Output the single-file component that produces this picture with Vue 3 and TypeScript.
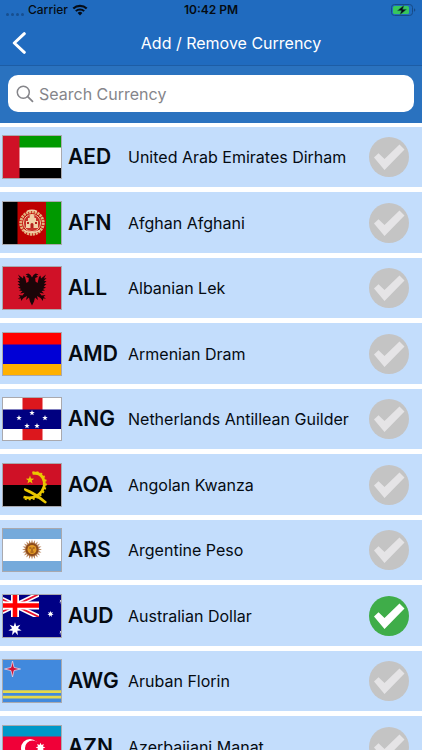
<script setup lang="ts">
import { ref } from 'vue'

interface Currency {
  code: string
  name: string
  selected: boolean
}

const query = ref('')

const currencies = ref<Currency[]>([
  { code: 'AED', name: 'United Arab Emirates Dirham', selected: false },
  { code: 'AFN', name: 'Afghan Afghani', selected: false },
  { code: 'ALL', name: 'Albanian Lek', selected: false },
  { code: 'AMD', name: 'Armenian Dram', selected: false },
  { code: 'ANG', name: 'Netherlands Antillean Guilder', selected: false },
  { code: 'AOA', name: 'Angolan Kwanza', selected: false },
  { code: 'ARS', name: 'Argentine Peso', selected: false },
  { code: 'AUD', name: 'Australian Dollar', selected: true },
  { code: 'AWG', name: 'Aruban Florin', selected: false },
  { code: 'AZN', name: 'Azerbaijani Manat', selected: false },
])

function matches(c: Currency): boolean {
  const q = query.value.trim().toLowerCase()
  return !q || c.code.toLowerCase().includes(q) || c.name.toLowerCase().includes(q)
}

// Points of a regular star, tip up.
function star(cx: number, cy: number, outer: number, inner: number, tips: number): string {
  const pts: string[] = []
  for (let i = 0; i < tips * 2; i++) {
    const r = i % 2 === 0 ? outer : inner
    const a = (Math.PI * i) / tips - Math.PI / 2
    pts.push(`${(cx + r * Math.cos(a)).toFixed(2)},${(cy + r * Math.sin(a)).toFixed(2)}`)
  }
  return pts.join(' ')
}

const antillesStars: [number, number][] = [[30, 16], [17, 21], [43, 21], [25, 29], [35, 29]]
</script>

<template>
  <div class="screen">
    <header class="top">
      <div class="status">
        <div class="carrier">
          <span class="dots"><i v-for="n in 4" :key="n"></i></span>
          <span>Carrier</span>
          <svg class="wifi" viewBox="0 0 16 12" aria-hidden="true">
            <path d="M1.3 4.5a9.6 9.6 0 0 1 13.4 0" fill="none" stroke="#050d18" stroke-width="2.2" />
            <path d="M3.8 7.1a6 6 0 0 1 8.4 0" fill="none" stroke="#050d18" stroke-width="2" />
            <path d="M8 11.4 5.6 9a3.4 3.4 0 0 1 4.8 0z" fill="#050d18" />
          </svg>
        </div>
        <time>10:42 PM</time>
        <svg class="battery" viewBox="0 0 25 12" aria-hidden="true">
          <rect x="0.5" y="0.5" width="21" height="11" rx="3" fill="none" stroke="#174a86" />
          <rect x="2" y="2" width="16" height="8" rx="1.5" fill="#37c75c" />
          <path d="M23 4.2v3.6c1.8-.6 1.8-3 0-3.6z" fill="#174a86" />
          <path d="M13.2.9 6.3 6.7h4L8.8 11.1l6.9-5.8h-4z" fill="#050d18" stroke="#2f8f64" stroke-width=".5" />
        </svg>
      </div>
      <nav class="nav">
        <button class="back" type="button" aria-label="Back">
          <svg viewBox="0 0 14 22" aria-hidden="true">
            <path d="M12.3 1.7 2.3 11l10 9.300" fill="none" stroke="#fff" stroke-width="3" stroke-linecap="round" stroke-linejoin="round" />
          </svg>
        </button>
        <h1>Add / Remove Currency</h1>
      </nav>
    </header>

    <div class="search">
      <label class="field">
        <svg viewBox="0 0 18 18" aria-hidden="true">
          <circle cx="7.3" cy="7.3" r="6" fill="none" stroke="#85858a" stroke-width="1.5" />
          <path d="m11.7 11.7 4.8 4.6" stroke="#85858a" stroke-width="1.8" stroke-linecap="round" />
        </svg>
        <input v-model="query" type="text" placeholder="Search Currency" aria-label="Search Currency" />
      </label>
    </div>

    <ul class="list">
      <li v-for="c in currencies.filter(matches)" :key="c.code">
        <label class="row">
          <svg class="flag" viewBox="0 0 60 44" aria-hidden="true">
            <g v-if="c.code === 'AED'">
              <rect width="60" height="44" fill="#fff" />
              <rect width="60" height="12.5" fill="#009a00" />
              <rect y="33" width="60" height="11" fill="#000" />
              <rect width="17.5" height="44" fill="#cf1126" />
            </g>
            <g v-else-if="c.code === 'AFN'">
              <rect width="60" height="44" fill="#be0000" />
              <rect width="15.5" height="44" fill="#000" />
              <rect x="44" width="16" height="44" fill="#009900" />
              <circle cx="30" cy="22" r="11.2" fill="none" stroke="#e3b07c" stroke-width="3" stroke-dasharray="2.2 .7" />
              <circle cx="30" cy="22" r="8.6" fill="#c9302a" stroke="#f0cfa6" stroke-width=".9" />
              <path d="M24 27v-7h2v-3h1.500q0-3.500 2.500-4 2.500.500 2.500 4H34v3h2v7z" fill="#f0cfa6" />
              <path d="M28.500 27v-4q1.500-2 3 0v4zM25 21h2v2h-2zM33 21h2v2h-2z" fill="#b4201c" />
              <path d="M22 29.500q8 4 16 0M25 10.500q5-2.500 10 0" fill="none" stroke="#f0cfa6" stroke-width="1.500" />
            </g>
            <g v-else-if="c.code === 'ALL'">
              <rect width="60" height="44" fill="#d01127" />
              <path
                d="M30 11.500 28.500 9 26.500 7.500 23.500 8.200 25.800 9.700 23.800 10.800 26.800 12 26.500 15.500 24.500 17
                   23 11 21.500 9.500 21 12.500 16 8.500 18 12.500 15.500 12 18 15 15.500 15 18 17.800 15.500 18 18.300 20.500
                   16 21.500 19 23 17 24.500 20.500 25 18 27.500 22.500 26.800 20.500 29.500 16.500 29 18.500 31 16 32.500 19 32.500
                   19 35 21.500 32 25 30 24 34 27 31.500 28 35.500 30 39.500 32 35.500 33 31.500 36 34 35 30 38.500 32 41 35
                   41 32.500 44 32.500 41.500 31 43.500 29 39.500 29.500 37.500 26.800 42 27.500 39.500 25 43 24.500 41 23 44 21.500
                   41.700 20.500 44.500 18 42 17.800 44.500 15 42 15 44.500 12 42 12.500 44 8.500 39 12.500 38.500 9.500 37 11
                   35.500 17 33.500 15.500 33.200 12 36.200 10.800 34.200 9.700 36.500 8.200 33.500 7.500 31.500 9z"
                fill="#1b0508"
              />
            </g>
            <g v-else-if="c.code === 'AMD'">
              <rect width="60" height="44" fill="#0000d6" />
              <rect width="60" height="12.500" fill="#ff0000" />
              <rect y="32" width="60" height="12" fill="#ffb000" />
            </g>
            <g v-else-if="c.code === 'ANG'">
              <rect width="60" height="44" fill="#fff" />
              <rect x="20.500" width="20" height="44" fill="#dc171d" />
              <rect y="12.500" width="60" height="19.500" fill="#000080" />
              <polygon v-for="([x, y], i) in antillesStars" :key="i" :points="star(x, y, 2.9, 1.2, 5)" fill="#fff" />
            </g>
            <g v-else-if="c.code === 'AOA'">
              <rect width="60" height="22" fill="#cf1126" />
              <rect y="22" width="60" height="22" fill="#000" />
              <path d="M30.500 10.500c10-2 15 9 9.500 17.500-4.500 6.500-11 8-18.500 6" fill="none" stroke="#eac800" stroke-width="2.800" />
              <path d="M30.500 9.500c11-2.500 17 9.500 11 19-5 7.500-12 9-20.500 7" fill="none" stroke="#eac800" stroke-width="2" stroke-dasharray="2 2" />
              <path d="M22.500 25q-1.500 2 1 3.200c7 3.300 13 7.300 19.500 12.300q1.800.200 1.700-1.800C38 33 31 28 22.500 25z" fill="#eac800" />
              <polygon :points="star(28, 17, 4.4, 1.8, 5)" fill="#eac800" />
            </g>
            <g v-else-if="c.code === 'ARS'">
              <rect width="60" height="44" fill="#fff" />
              <rect width="60" height="11" fill="#75aadb" />
              <rect y="33" width="60" height="11" fill="#75aadb" />
              <polygon :points="star(30, 21.5, 10, 6.500, 20)" fill="#b98359" />
              <circle cx="30" cy="21.500" r="6.500" fill="#8c4b1a" />
              <circle cx="30" cy="21.500" r="4.500" fill="#e39a24" />
              <path d="M27.300 20h2M30.700 20h2M30 20.500v2.500M28.500 24h3" stroke="#7c3d12" stroke-width="1" />
            </g>
            <g v-else-if="c.code === 'AUD'">
              <rect width="60" height="44" fill="#000085" />
              <svg width="37" height="23" viewBox="0 0 37 23">
                <path d="M-11 0 37 23M37 0-11 23" stroke="#fff" stroke-width="5" />
                <path d="M-11 0 37 23M37 0-11 23" stroke="#e8112d" stroke-width="1.800" />
                <path d="M13 0v23M0 11.500h37" stroke="#fff" stroke-width="8" />
                <path d="M13 0v23M0 11.500h37" stroke="#ff0000" stroke-width="4.600" />
              </svg>
              <polygon :points="star(13, 35, 6.800, 3, 7)" fill="#fff" />
              <polygon :points="star(48.500, 20, 3.200, 1.500, 7)" fill="#fff" />
              <polygon :points="star(60, 7.500, 3, 1.400, 7)" fill="#fff" />
              <polygon :points="star(60, 38.500, 3, 1.400, 7)" fill="#fff" />
            </g>
            <g v-else-if="c.code === 'AWG'">
              <rect width="60" height="44" fill="#4189dd" />
              <path d="M0 32.700h60M0 38.200h60" stroke="#e5d84c" stroke-width="2.800" />
              <polygon :points="star(10.500, 10, 8, 2.200, 4)" fill="#d21034" stroke="#e6d4e4" stroke-width=".8" />
            </g>
            <g v-else>
              <rect width="60" height="44" fill="#f00038" />
              <rect width="60" height="11.500" fill="#0098c8" />
              <rect y="33" width="60" height="11" fill="#009a4e" />
              <circle cx="28" cy="23" r="9" fill="#fff" />
              <circle cx="30.500" cy="23" r="7.500" fill="#f00038" />
              <polygon :points="star(38.500, 22.500, 4.800, 2.700, 8)" fill="#fff" />
            </g>
            <rect x="0.500" y="0.500" width="59" height="43" fill="none" stroke="#a9a9ae" />
          </svg>
          <span class="code">{{ c.code }}</span>
          <span class="name">{{ c.name }}</span>
          <span class="tick">
            <input v-model="c.selected" type="checkbox" />
            <svg viewBox="0 0 40 40" aria-hidden="true">
              <circle cx="20" cy="20" r="20" />
              <path d="m5 20.500 4.500-4.300 6 5.800L30.500 7.500l5 5L15.500 33z" />
            </svg>
          </span>
        </label>
      </li>
    </ul>
  </div>
</template>

<style>
body {
  margin: 0;
  overflow: hidden;
}
</style>

<style scoped>
.screen {
  display: flex;
  flex-direction: column;
  height: 100vh;
  background: #fff;
  color: #050b12;
  font-family: Inter, 'Liberation Sans', sans-serif;
}

.top {
  flex: none;
  background: #206bbf;
  border-bottom: 1px solid #1d5da5;
}

.status {
  display: grid;
  grid-template-columns: 1fr auto 1fr;
  align-items: center;
  height: 20px;
  padding: 0 6px;
  font-size: 12px;
  font-weight: 500;
  line-height: 20px;
}

.carrier {
  display: flex;
  align-items: center;
  gap: 4px;
}

.dots {
  display: flex;
  gap: 2px;
  padding-top: 8px;
}

.dots i {
  width: 3px;
  height: 3px;
  border-radius: 50%;
  background: #174f90;
}

.wifi {
  width: 16px;
  height: 12px;
}

time {
  font-weight: 600;
}

.battery {
  justify-self: end;
  width: 25px;
  height: 12px;
}

.nav {
  display: grid;
  grid-template-columns: 40px 1fr;
  align-items: center;
  height: 45px;
}

.back {
  display: flex;
  justify-content: flex-end;
  padding: 8px 14px 8px 0;
  border: 0;
  background: none;
  cursor: pointer;
}

.back svg {
  width: 14px;
  height: 22px;
}

h1 {
  margin: 0;
  color: #fff;
  font-size: 16px;
  font-weight: 400;
  line-height: 24px;
  text-align: center;
}

.search {
  flex: none;
  padding: 9px 8px 11px;
  background: #2a72bf;
}

.field {
  display: flex;
  align-items: center;
  gap: 5px;
  height: 37px;
  padding: 0 8px;
  border-radius: 10px;
  background: #fff;
}

.field svg {
  flex: none;
  width: 18px;
  height: 18px;
}

.field input {
  flex: 1;
  min-width: 0;
  padding: 0;
  border: 0;
  outline: 0;
  background: none;
  color: #050b12;
  font: inherit;
  font-size: 16px;
  line-height: 24px;
}

.field input::placeholder {
  color: #85858a;
  opacity: 1;
}

.list {
  flex: 1;
  min-height: 0;
  margin: 0;
  padding: 4px 0 0;
  overflow-y: auto;
  scrollbar-width: none;
  list-style: none;
}

.row {
  display: grid;
  grid-template-columns: 60px 54px 1fr 40px;
  column-gap: 6px;
  align-items: center;
  height: 60px;
  margin-bottom: 5px;
  padding: 0 13px 0 2px;
  background: #c3ddfc;
  cursor: pointer;
}

li:nth-child(even) .row {
  height: 61px;
}

.flag {
  width: 60px;
  height: 44px;
}

.code {
  font-size: 21px;
  font-weight: 600;
  line-height: 28px;
}

.name {
  font-size: 16px;
  line-height: 24px;
  white-space: nowrap;
}

.tick {
  position: relative;
  width: 40px;
  height: 40px;
}

.tick input {
  position: absolute;
  inset: 0;
  width: 100%;
  height: 100%;
  margin: 0;
  opacity: 0;
  cursor: pointer;
}

.tick svg {
  display: block;
}

.tick circle {
  fill: #c4c4c4;
}

.tick path {
  fill: #e5e4e6;
}

.tick input:checked + svg circle {
  fill: #3fad49;
}

.tick input:checked + svg path {
  fill: #fff;
}

.tick input:focus-visible + svg {
  border-radius: 50%;
  outline: 2px solid #206bbf;
}
</style>
